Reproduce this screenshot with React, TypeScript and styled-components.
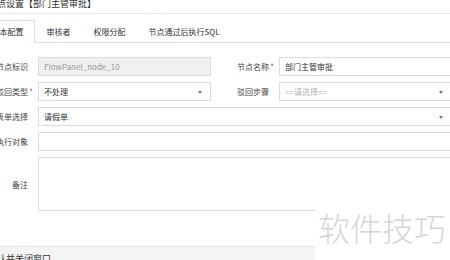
import styled, { createGlobalStyle, css } from 'styled-components';

const GlobalStyle = createGlobalStyle`
  body {
    margin: 0;
    background: #fff;
    font-family: "Noto Sans CJK SC", "Noto Sans", sans-serif;
    color: #333;
  }
`;

const tabs = ['基本配置', '审核者', '权限分配', '节点通过后执行SQL'];

export default function App() {
  return (
    <Page>
      <GlobalStyle />
      <Dialog>
        <Header>节点设置【部门主管审批】</Header>
        <TabBar>
          {tabs.map((t, i) => (
            <Tab key={t} $active={i === 0}>{t}</Tab>
          ))}
        </TabBar>
        <Form>
          <Label>节点标识<Star /></Label>
          <Field $disabled>FlowPanel_node_10</Field>
          <Label>节点名称<Star>*</Star></Label>
          <Field>部门主管审批</Field>

          <Label>驳回类型<Star>*</Star></Label>
          <Field>不处理<Arrow /></Field>
          <Label>驳回步骤<Star /></Label>
          <Field $placeholder>==请选择==<Arrow /></Field>

          <Label>表单选择<Star /></Label>
          <Field $wide>请假单<Arrow /></Field>

          <Label>执行对象<Star /></Label>
          <Field $wide />

          <Label>备注<Star /></Label>
          <Field $wide $tall />
        </Form>
        <Footer>确认并关闭窗口</Footer>
      </Dialog>
      <Watermark>软件技巧</Watermark>
    </Page>
  );
}

const Page = styled.div`
  position: relative;
  width: 450px;
  height: 260px;
  overflow: hidden;
`;

const Dialog = styled.div`
  width: 476px;
  margin: -6px 0 0 -24px;
`;

const Header = styled.div`
  height: 19px;
  line-height: 19px;
  padding-left: 12px;
  font-size: 9px;
  color: #333;
  border-bottom: 1px solid #e6e6e6;
`;

const TabBar = styled.div`
  display: flex;
  padding: 6px 0 0 4px;
  border-bottom: 1px solid #dedede;
`;

const Tab = styled.div<{ $active?: boolean }>`
  box-sizing: border-box;
  height: 23px;
  margin-bottom: -1px;
  padding: 0 10.5px;
  line-height: 21px;
  font-size: 8px;
  color: #333;
  border: 1px solid transparent;
  border-bottom: none;
  ${(p) => p.$active && css`
    background: #fff;
    border-color: #dedede;
  `}
`;

const Form = styled.div`
  display: grid;
  grid-template-columns: 62px 1fr 68px 1fr;
  row-gap: 6px;
  padding-top: 14px;
`;

const Label = styled.div`
  display: flex;
  align-items: center;
  justify-content: flex-end;
  padding-right: 4px;
  font-size: 8px;
  color: #444;
  white-space: nowrap;
`;

const Star = styled.span`
  width: 6px;
  text-align: center;
  color: #e4393c;
  font-size: 8px;
`;

const Field = styled.div<{ $disabled?: boolean; $placeholder?: boolean; $wide?: boolean; $tall?: boolean }>`
  position: relative;
  box-sizing: border-box;
  display: flex;
  align-items: center;
  height: ${(p) => (p.$tall ? '54px' : '19px')};
  padding: 0 5px;
  border: 1px solid #dcdcdc;
  background: ${(p) => (p.$disabled ? '#f0f0f0' : '#fff')};
  color: ${(p) => (p.$disabled ? '#999' : p.$placeholder ? '#b5b5b5' : '#333')};
  font-size: 8px;
  ${(p) => p.$wide && css`grid-column: 2 / -1;`}
`;

const Arrow = styled.span`
  position: absolute;
  right: 8px;
  top: 8px;
  border-left: 2.5px solid transparent;
  border-right: 2.5px solid transparent;
  border-top: 3px solid #777;
`;

const Footer = styled.div`
  margin-top: 35px;
  height: 30px;
  padding: 6px 0 0 12px;
  font-size: 9px;
  line-height: 12px;
  color: #333;
  background: #f4f4f4;
  border-top: 1px solid #e6e6e6;
`;

const Watermark = styled.div`
  position: absolute;
  right: 0;
  bottom: 0;
  box-sizing: border-box;
  width: 135px;
  height: 55px;
  padding: 6px 0 0 3px;
  background: #fff;
  color: #d6d6d6;
  font-size: 32px;
  font-weight: 300;
  line-height: 32px;
  white-space: nowrap;
`;
